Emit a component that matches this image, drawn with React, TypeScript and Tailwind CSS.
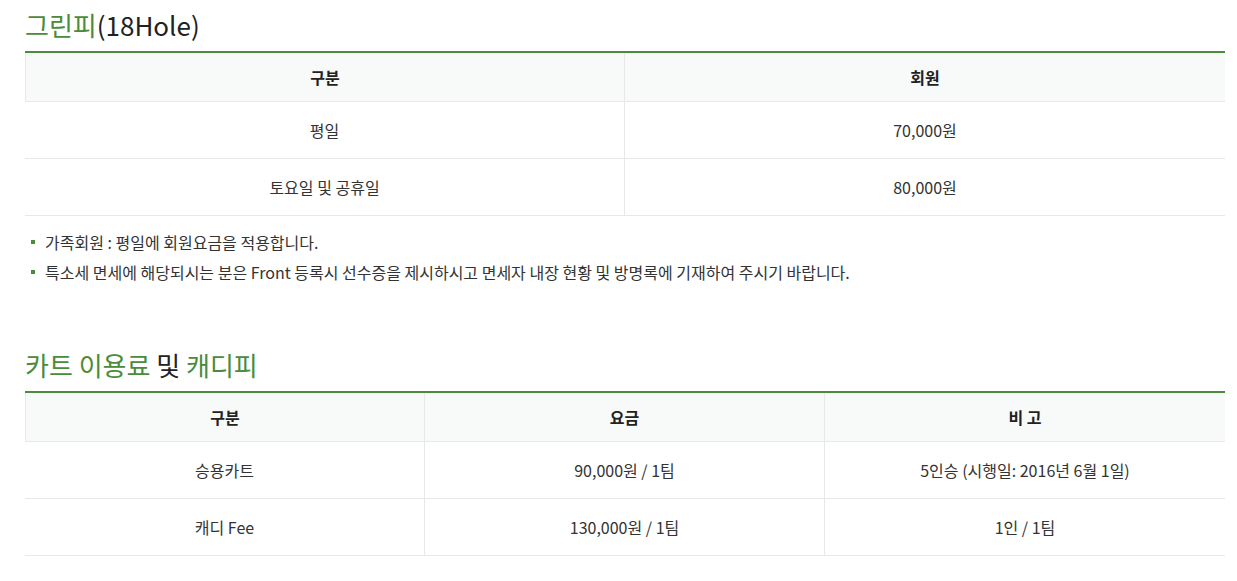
const font = { fontFamily: '"Noto Sans CJK KR", "Noto Sans", sans-serif' };

const Title = ({ green, rest }: { green: React.ReactNode; rest?: React.ReactNode }) => (
  <h3 className="text-[26px] leading-[38px] font-normal text-[#222] mb-[7px]">
    {green}
    {rest}
  </h3>
);

const G = ({ children }: { children: React.ReactNode }) => (
  <span className="text-[#4a8c3a]">{children}</span>
);

const PriceTable = ({ cols, head, rows }: { cols: string; head: string[]; rows: string[][] }) => (
  <div className="border-t-2 border-[#4a8c3a] text-[16px]">
    <div className={`grid ${cols} bg-[#f8f9f9] border-b border-[#e8e8e8]`}>
      {head.map((h, i) => (
        <div
          key={h}
          className={`h-[48px] flex items-center justify-center font-bold text-[#222] border-[#e8e8e8] ${i === 0 ? "border-l" : ""} ${i < head.length - 1 ? "border-r" : ""}`}
        >
          {h}
        </div>
      ))}
    </div>
    {rows.map((r, ri) => (
      <div key={ri} className={`grid ${cols} border-b border-[#e8e8e8]`}>
        {r.map((c, i) => (
          <div
            key={i}
            className={`h-[56px] flex items-center justify-center text-[#333] ${i < r.length - 1 ? "border-r border-[#e8e8e8]" : ""}`}
          >
            {c}
          </div>
        ))}
      </div>
    ))}
  </div>
);

// 안내 문구 목록
const Note = ({ children }: { children: React.ReactNode }) => (
  <li className="flex items-center">
    <span className="w-[4px] h-[4px] bg-[#4a8c3a] ml-[6px] mr-[10px]" />
    {children}
  </li>
);

export default function App() {
  return (
    <div className="bg-white min-h-[581px] pl-[25px] pt-[6px]" style={font}>
      <div className="w-[1200px]">
        <Title green={<G>그린피</G>} rest="(18Hole)" />
        <PriceTable
          cols="grid-cols-2"
          head={["구분", "회원"]}
          rows={[
            ["평일", "70,000원"],
            ["토요일 및 공휴일", "80,000원"],
          ]}
        />
        <ul className="mt-[11px] text-[16px] leading-[30px] text-[#333]">
          <Note>가족회원 : 평일에 회원요금을 적용합니다.</Note>
          <Note>
            특소세 면세에 해당되시는 분은 Front 등록시 선수증을 제시하시고 면세자 내장 현황 및 방명록에 기재하여 주시기 바랍니다.
          </Note>
        </ul>
        <div className="mt-[59px]">
          <Title
            green={<G>카트 이용료 </G>}
            rest={
              <>
                및 <G>캐디피</G>
              </>
            }
          />
        </div>
        <PriceTable
          cols="grid-cols-3"
          head={["구분", "요금", "비 고"]}
          rows={[
            ["승용카트", "90,000원 / 1팀", "5인승 (시행일: 2016년 6월 1일)"],
            ["캐디 Fee", "130,000원 / 1팀", "1인 / 1팀"],
          ]}
        />
      </div>
    </div>
  );
}
